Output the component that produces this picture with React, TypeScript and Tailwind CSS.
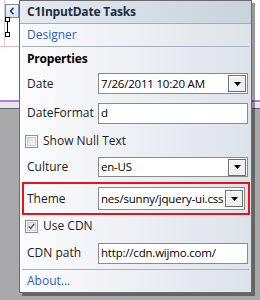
import React from 'react'

const font = "font-['Segoe_UI','Open_Sans',sans-serif]"

const DropButton = () => (
  <div className="w-[18px] h-[17px] shrink-0 border border-[#6f6f6f] bg-[#f0f0f0] flex items-center justify-center shadow-[inset_1px_1px_0_#ffffff]">
    <svg width="7" height="4" viewBox="0 0 7 4"><path d="M0 0h7L3.5 4z" fill="#000" /></svg>
  </div>
)

const TextBox = ({ value, combo, width = 'w-[150px]', height = 'h-[21px]' }: { value: string; combo?: boolean; width?: string; height?: string }) => (
  <div className={`${width} ${height} border border-[#8b8b8b] bg-white flex items-center pl-[2px] pr-[1px] overflow-hidden`}>
    <span className="flex-1 whitespace-nowrap overflow-hidden text-[11.5px] leading-[16px] tracking-[-0.2px] text-black">{value}</span>
    {combo && <DropButton />}
  </div>
)

const CheckBox = ({ checked }: { checked?: boolean }) => (
  <div className="w-[13px] h-[13px] border border-[#8e8f8f] bg-white p-[1px]">
    <div className="w-full h-full border border-[#c9cacb] bg-linear-to-br from-[#dcdcdc] to-[#fbfbfb] flex items-center justify-center">
      {checked && (
        <svg width="9" height="9" viewBox="0 0 9 9"><path d="M1 4.5 L3.5 7 L8 1.2" stroke="#3b4f86" strokeWidth="1.8" fill="none" /></svg>
      )}
    </div>
  </div>
)

const Row = ({ label, children, h }: { label: string; children: React.ReactNode; h: string }) => (
  <div className={`${h} flex items-center pl-[7px]`}>
    <div className="w-[71px] text-[12px] text-[#1e1e1e]">{label}</div>
    {children}
  </div>
)

export default function App() {
  return (
    <div className={`relative w-[260px] h-[300px] overflow-hidden ${font}`}>
      {/* designer surface behind the popup */}
      <div className="flex flex-col h-full">
        <div className="h-[100px] bg-white relative">
          <div className="absolute left-0 top-[46px] w-[19px] h-px bg-[#e8b8c0]" />
          <div className="absolute left-[4px] top-0 w-px h-[46px] bg-[#e8c4cc]" />
          <div className="absolute left-[5px] top-[4px] w-[14px] h-[14px] border border-[#7a8ba8] bg-linear-to-b from-[#f4f7fb] to-[#d9e2ee] flex items-center justify-center">
            <svg width="6" height="8" viewBox="0 0 6 8"><path d="M4.5 0.8 L1.5 4 L4.5 7.2" stroke="#1e2e48" strokeWidth="1.4" fill="none" /></svg>
          </div>
          <div className="absolute left-[5px] top-[17px] w-[5px] h-[5px] border border-black bg-white" />
          <div className="absolute left-[7px] top-[22px] w-px h-[10px] bg-black" />
          <div className="absolute left-[5px] top-[32px] w-[5px] h-[5px] border border-black bg-white" />
        </div>
        <div className="h-[2px] bg-[#a77ff0]" />
        <div className="h-[6px] bg-[#e6e6e8]" />
        <div className="h-px bg-[#5f6570]" />
        <div className="flex-1 bg-[#a9a9ac]" />
      </div>

      {/* smart tag popup */}
      <div className="absolute left-[19px] top-0 w-[233px] h-[293px] border border-[#6b6b6b] bg-linear-to-r from-[#fbfcfd] to-[#dee3ea] shadow-[3px_3px_0_rgba(0,0,0,0.4)] flex flex-col">
        <div className="h-[23px] border-b border-[#a3adbb] bg-linear-to-r from-[#e6eaf0] to-[#cad2dd] flex items-center pl-[7px]">
          <span className="text-[12px] font-bold tracking-[-0.2px] text-[#1f2d44]">C1InputDate Tasks</span>
        </div>
        <div className="h-[22px] flex items-center pl-[7px]">
          <span className="text-[12px] text-[#2a62c9]">Designer</span>
        </div>
        <div className="h-px mx-[2px] bg-[#a7b1bf]" />
        <div className="h-[24px] flex items-center pl-[7px]">
          <span className="text-[12px] font-bold tracking-[-0.2px] text-black">Properties</span>
        </div>
        <Row label="Date" h="h-[25px]">
          <TextBox value="7/26/2011 10:20 AM" combo />
        </Row>
        <Row label="DateFormat" h="h-[34px]">
          <TextBox value="d" />
        </Row>
        <div className="h-[22px] flex items-center pl-[5px] gap-[5px]">
          <CheckBox />
          <span className="text-[12px] text-[#1e1e1e]">Show Null Text</span>
        </div>
        <Row label="Culture" h="h-[30px]">
          <TextBox value="en-US" combo height="h-[20px]" />
        </Row>
        <div className="h-[33px] ml-[2px] mr-px border-2 border-[#e8141a] flex items-center pl-[3px]">
          <div className="w-[71px] text-[12px] text-[#1e1e1e]">Theme</div>
          <TextBox value="nes/sunny/jquery-ui.css" combo width="w-[147px]" height="h-[23px]" />
        </div>
        <div className="h-[22px] flex items-center pl-[5px] gap-[5px]">
          <CheckBox checked />
          <span className="text-[12px] text-[#1e1e1e]">Use CDN</span>
        </div>
        <Row label="CDN path" h="h-[32px]">
          <TextBox value="http://cdn.wijmo.com/" />
        </Row>
        <div className="h-px mx-[2px] bg-[#a7b1bf]" />
        <div className="h-[22px] flex items-center pl-[7px]">
          <span className="text-[12px] text-[#2a62c9]">About...</span>
        </div>
      </div>
    </div>
  )
}
